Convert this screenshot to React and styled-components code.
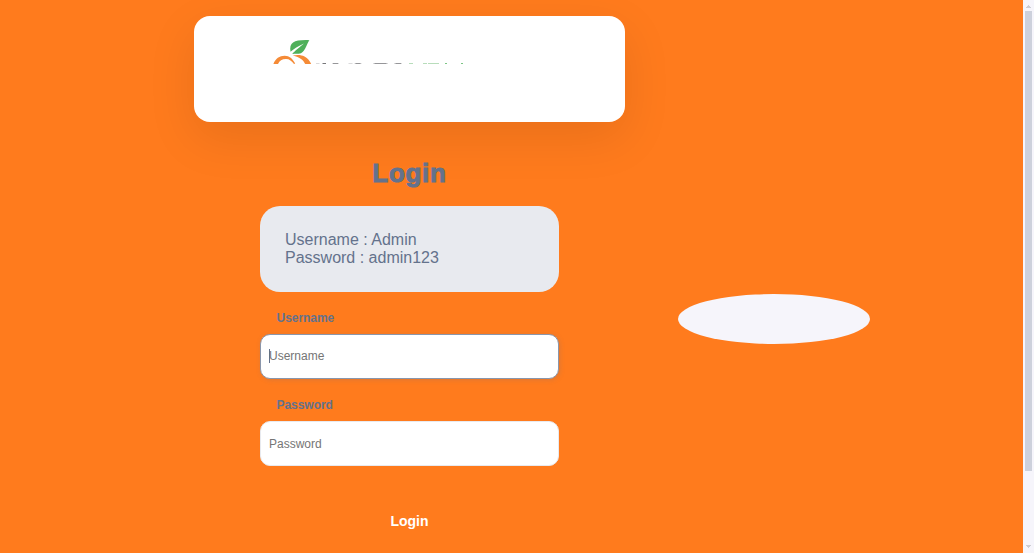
import React from "react";
import styled, { createGlobalStyle } from "styled-components";

const GlobalStyle = createGlobalStyle`
  * { box-sizing: border-box; }
  body { margin: 0; overflow: hidden; font-family: "Liberation Sans", Arial, sans-serif; }
`;
const Page = styled.div`
  display: flex;
  height: 553px;
  background: #ff7b1d;
  overflow: hidden;
`;
const Content = styled.main`
  flex: 1;
  display: flex;
`;
const LoginColumn = styled.section`
  width: 431px;
  margin-left: 194px;
  padding-top: 16px;
  display: flex;
  flex-direction: column;
  align-items: center;
`;
const LogoCard = styled.div`
  width: 431px;
  height: 106px;
  flex: none;
  padding: 23px 0 0 77px;
  border-radius: 16px;
  background: #fff;
  box-shadow: 0 16px 48px 2px rgba(0, 0, 0, 0.085);
`;
const Logo = styled.svg`
  display: block;
`;
const Title = styled.h1`
  margin: 36px 0 0;
  height: 30px;
  line-height: 30px;
  font-size: 26px;
  font-weight: 700;
  letter-spacing: 0.7px;
  color: #64728c;
  -webkit-text-stroke: 1px #64728c;
`;
const Form = styled.form`
  width: 299px;
  margin-top: 18px;
  display: flex;
  flex-direction: column;
`;
const Hint = styled.div`
  height: 86px;
  padding: 25px;
  border-radius: 20px;
  background: #e8eaef;
  color: #64728c;
  font-size: 16px;
  line-height: 18px;
  p { margin: 0; }
`;
const Label = styled.label`
  margin: 18px 0 8px 16.5px;
  height: 16px;
  line-height: 16px;
  font-size: 12px;
  font-weight: 700;
  letter-spacing: -0.04px;
  color: #64728c;
`;
const Field = styled.div`
  display: flex;
  align-items: center;
  height: 45px;
  padding: 0 8px ${(p) => (p.$focused ? "2px" : "0")};
  border: 1px solid ${(p) => (p.$focused ? "#8a96ab" : "#e8eaef")};
  border-radius: 10px;
  background: #fff;
  box-shadow: ${(p) => (p.$focused ? "1px 1px 5px rgba(100,114,140,0.22)" : "none")};
  color: #757575;
  font-size: 12px;
`;
const Caret = styled.span`
  width: 1px;
  height: 14px;
  margin-right: -1px;
  background: #64728c;
`;
const Submit = styled.button`
  height: 42px;
  margin: 34px 0 0;
  padding: 0;
  border: 0;
  background: transparent;
  color: #fff;
  font: 700 14px "Liberation Sans", Arial, sans-serif;
`;
const Brand = styled.aside`
  width: 192px;
  height: 50px;
  margin: 294px 0 0 53px;
  border-radius: 50%;
  background: #f6f5fb;
`;
const Scrollbar = styled.div`
  width: 11px;
  display: flex;
  flex-direction: column;
  align-items: center;
  background: #f6f5fb;
`;
const Thumb = styled.div`
  width: 7px;
  height: 460px;
  background: #cdd1dc;
`;
const Arrow = styled.svg`
  display: block;
  margin: ${(p) => p.$margin};
`;

function LogoMark() {
  return (
    <Logo width="200" height="25" viewBox="271 39 200 25">
      <path d="M290.5 51.8C288.8 42 295 39.6 309.4 40.2C306.5 44 306 50 301 53.2C298 54 295 53.6 292.3 54C293.5 52.5 296 50.2 304 43.6C298.5 46.4 293.5 49 290.5 51.8Z" fill="#4fb05a" />
      <path d="M273.4 64C275.5 58.5 279.5 55.7 284.7 55.7C289.5 55.7 292.3 58.5 295.2 63.4L294 64C291.8 61 289.5 59 286 59C282 59 279.5 60.5 278 64Z" fill="#f58b37" />
      <path d="M292.7 55.4C298 54.4 301.5 54.9 304.5 56.4C308 58.3 309.7 60.5 311.2 64H305.2C303.5 60 300 57.2 292.7 55.4Z" fill="#f58b37" />
      <path d="M322.5 63.5h3.5M333 63.5h5M355.5 63.5h5M374.5 63.5h12M395.5 63.5h5.5" stroke="#77777a" />
      <path d="M316 63.5h3.5M332 63.5h7M348.5 63.5h4M354.5 63.5h7M373 63.5h15M394 63.5h8" stroke="#b5b5b8" strokeOpacity=".5" />
      <path d="M409 63.5h4M423 63.5h4M428 63.5h11" stroke="#b8ddbb" />
      <path d="M445 63.5h2M461 63.5h2" stroke="#7cc584" />
    </Logo>
  );
}

export default function App() {
  return (
    <Page>
      <GlobalStyle />
      <Content>
        <LoginColumn>
          <LogoCard><LogoMark /></LogoCard>
          <Title>Login</Title>
          <Form>
            <Hint><p>Username : Admin</p><p>Password : admin123</p></Hint>
            <Label>Username</Label>
            <Field $focused><Caret />Username</Field>
            <Label>Password</Label>
            <Field>Password</Field>
            <Submit type="button">Login</Submit>
          </Form>
        </LoginColumn>
        <Brand />
      </Content>
      <Scrollbar>
        <Arrow $margin="5px 0 3px" width="5" height="3"><path d="M0 3V2H1V1H2V0H3V1H4V2H5V3Z" fill="#cdcdd3" /></Arrow>
        <Thumb />
        <Arrow $margin="74px 0 0" width="5" height="3"><path d="M0 0H5V1H4V2H3V3H2V2H1V1H0Z" fill="#cdcdd3" /></Arrow>
      </Scrollbar>
    </Page>
  );
}
